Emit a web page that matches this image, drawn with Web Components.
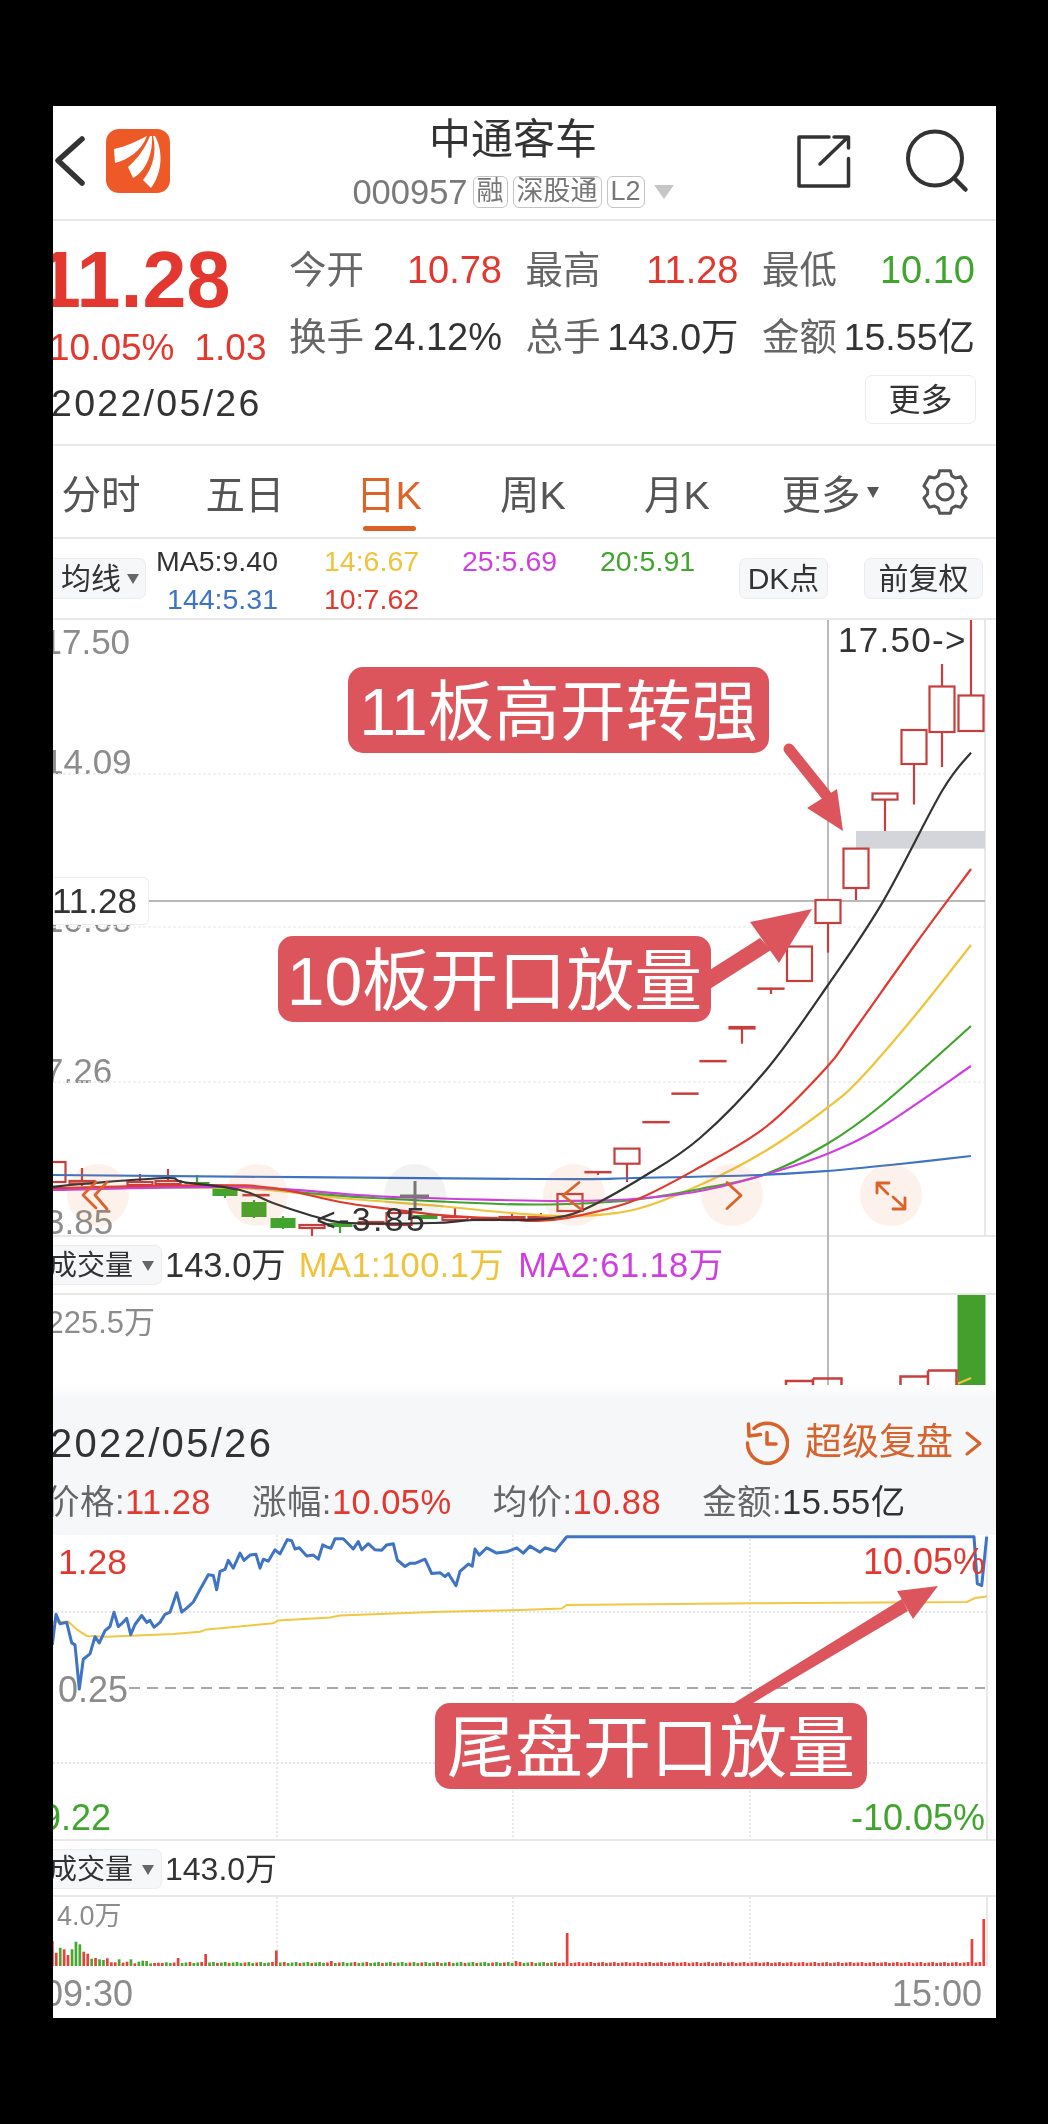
<!DOCTYPE html>
<html lang="zh-CN"><head><meta charset="utf-8"><title>中通客车</title>
<style>
html,body{margin:0;background:#000}
body{height:2124px;font-family:"Liberation Sans","Noto Sans CJK SC",sans-serif;color:#333}
</style></head>
<body>
<hq-app>
  <stock-header></stock-header>
  <quote-panel></quote-panel>
  <period-tabs></period-tabs>
  <ma-legend></ma-legend>
  <kline-chart></kline-chart>
  <vol-bar size="34.5" crosshair value="143.0万"><span style="color:#f0c33c;margin-left:13px;letter-spacing:.4px">MA1:100.1万</span><span style="color:#cf3fe0;margin-left:14px;letter-spacing:.4px">MA2:61.18万</span></vol-bar>
  <kline-volume></kline-volume>
  <detail-bar></detail-bar>
  <intraday-chart></intraday-chart>
  <vol-bar size="32" value="143.0万" style="height:56px"></vol-bar>
  <mini-volume></mini-volume>
  <time-axis></time-axis>
</hq-app>
<script>
const RED='#e2382f',GREEN='#3fa52c',CANDLE='#c63f3c',AXIS='#8c8c8c';
const LINE='#e8e8e8';
function el(name,css,html){
  customElements.define(name,class extends HTMLElement{
    constructor(){super();const s=this.attachShadow({mode:'open'});
      const body=typeof html==='function'?html(this):html;
      s.innerHTML=`<style>:host{display:block;box-sizing:border-box;position:relative}*{box-sizing:border-box}${css}</style>${body}`;}
  });
}
// smooth path through points
function smooth(p){
  let d=`M${p[0][0]} ${p[0][1]}`;
  for(let i=0;i<p.length-1;i++){
    const a=p[i-1]||p[i],b=p[i],c=p[i+1],e=p[i+2]||c;
    d+=`C${(b[0]+(c[0]-a[0])/6).toFixed(1)} ${(b[1]+(c[1]-a[1])/6).toFixed(1)},${(c[0]-(e[0]-b[0])/6).toFixed(1)} ${(c[1]-(e[1]-b[1])/6).toFixed(1)},${c[0]} ${c[1]}`;
  }
  return d;
}
const CANVAS=`.l{position:absolute;white-space:nowrap;transform:translateY(-50%);line-height:1.2}svg{position:absolute;left:0;top:0;display:block}`;
const svg=(y0,h,inner)=>`<svg width="943" height="${h}" viewBox="53 ${y0} 943 ${h}" fill="none">${inner}</svg>`;
const lab=(y0,x,y,t,size,color,extra='')=>`<span class="l" style="left:${x-53}px;top:${y-y0}px;font-size:${size}px;color:${color};${extra}">${t}</span>`;
const labR=(y0,x,y,t,size,color,extra='')=>`<span class="l" style="right:${996-x}px;top:${y-y0}px;font-size:${size}px;color:${color};${extra}">${t}</span>`;

function gearPath(cx,cy){
  const P=(a,r)=>{const t=a*Math.PI/180;return (cx+r*Math.cos(t)).toFixed(1)+' '+(cy+r*Math.sin(t)).toFixed(1);};
  let d=[];
  for(let k=0;k<6;k++){const a=-90+k*60;d.push(P(a-23,17.5),P(a-14,22),P(a+14,22),P(a+23,17.5));}
  return 'M'+d.join('L')+'Z';
}

el('hq-app',`:host{width:943px;height:1912px;margin:106px 0 0 53px;overflow:hidden;background:#fff;filter:blur(.45px)}`,`<slot></slot>`);

el('tool-chip',`:host{display:inline-flex;align-items:center;justify-content:center;gap:6px;height:40px;padding-top:1px;background:#f6f7f9;border:1.5px solid #ececef;border-radius:7px;font-size:30px;color:#333;white-space:nowrap;line-height:1}
 i{flex:none;width:0;height:0;border-left:6.5px solid transparent;border-right:6.5px solid transparent;border-top:10px solid #666}`,
 h=>`<slot></slot>${h.hasAttribute('caret')?'<i></i>':''}`);

el('stock-header',CANVAS+`:host{height:115px;display:flex;border-bottom:2px solid ${LINE}}
 .left{width:290px;position:relative}
 .mid{width:340px;display:flex;flex-direction:column;align-items:center;padding-top:9px;position:relative}
 h1{margin:0;font-weight:400;font-size:42px;line-height:50px;color:#333}
 .sub{display:flex;align-items:center;margin-top:11px;height:32px;color:#7a7a7a;font-size:34.5px;line-height:32px}
 .tag{height:32px;margin-left:5px;padding:0 3px;border:1.5px solid #c4c4c4;border-radius:6px;font-size:27px;line-height:28px;color:#777}
 .tri{margin-left:9px;width:0;height:0;border-left:10px solid transparent;border-right:10px solid transparent;border-top:14px solid #c6c6c6}`,
`<div class="left">${svg(106,113,`
   <path d="M82 139 58 160.500 82 183" stroke="#333" stroke-width="5.500" stroke-linecap="round" stroke-linejoin="round"/>
   <rect x="106" y="129" width="64" height="64" rx="13" fill="#ee5a27"/>
   <path d="M147 136C135 142 125 147 114 149L115 163C128 160 142 150 147 136Z" fill="#fff"/>
   <path d="M150 136C144 150 138 158 128 167L133 178C145 172 153 155 152 136Z" fill="#fff"/>
   <path d="M153 136C157 152 153 168 143 180L151 188C163 172 163 150 155 136Z" fill="#fff"/>
   <path d="M829 137H799V186H848.500V158.500M820 164 847 138M834 137H848.500V148" stroke="#333" stroke-width="3.500" stroke-linejoin="round" stroke-linecap="round"/>
   <circle cx="935" cy="158.500" r="27" stroke="#333" stroke-width="4"/>
   <path d="M954 178 965.500 189.500" stroke="#333" stroke-width="4.500" stroke-linecap="round"/>`)}</div>
 <div class="mid"><h1>中通客车</h1>
  <div class="sub"><span>000957</span><span class="tag">融</span><span class="tag">深股通</span><span class="tag">L2</span><span class="tri"></span></div></div>`);

el('quote-panel',`:host{height:225px;display:flex;border-bottom:2px solid ${LINE}}
 .a{width:236px;flex:none;padding-top:20px}
 .big{margin-left:-16px;font-size:79px;font-weight:700;line-height:78px;color:${RED}}
 .chg{margin:7px 0 0 -4px;display:flex;gap:20px;font-size:37px;line-height:44px;color:${RED}}
 .dt{margin:11px 0 0 -2px;font-size:37.500px;line-height:44px;letter-spacing:2.300px;color:#333}
 .b{flex:1;padding-top:27px;display:flex;flex-direction:column;align-items:flex-end}
 .g{align-self:stretch;display:grid;grid-template-columns:repeat(3,213px);column-gap:23.500px;row-gap:23px}
 .c{display:flex;justify-content:space-between;line-height:44px;font-size:38px;color:#333;white-space:nowrap}
 .c span:first-child{font-size:37.500px;color:#666}
 .r{color:${RED}}.gr{color:${GREEN}}
 .t{font-size:37.500px}
 tool-chip{margin:16px 20px 0 0;width:111px;height:49px;background:#fff;font-size:32px}`,
`<div class="a"><div class="big">11.28</div><div class="chg"><span>10.05%</span><span>1.03</span></div><div class="dt">2022/05/26</div></div>
 <div class="b"><div class="g">
  <div class="c"><span>今开</span><span class="r">10.78</span></div>
  <div class="c"><span>最高</span><span class="r">11.28</span></div>
  <div class="c"><span>最低</span><span class="gr">10.10</span></div>
  <div class="c"><span>换手</span><span>24.12%</span></div>
  <div class="c"><span>总手</span><span class="t">143.0万</span></div>
  <div class="c"><span>金额</span><span class="t">15.55亿</span></div>
 </div><tool-chip>更多</tool-chip></div>`);

el('period-tabs',`:host{height:93px;display:flex;padding-top:24px;margin-left:-24px;border-bottom:2px solid ${LINE}}
 .t{width:144px;flex:none;position:relative;display:flex;flex-direction:column;align-items:center;font-size:39.500px;line-height:50px;color:#555;white-space:nowrap}
 .on{color:#dc6427}
 .on::after{content:"";width:53px;height:5px;margin-top:6px;border-radius:3px;background:#dc5f25}
 .t i{position:absolute;left:118px;top:17px;width:0;height:0;border-left:6.500px solid transparent;border-right:6.500px solid transparent;border-top:11px solid #555}
 svg{margin:-2px 0 0 29px;flex:none;display:block}`,
`<div class="t">分时</div><div class="t">五日</div><div class="t on">日K</div><div class="t">周K</div><div class="t">月K</div><div class="t">更多<i></i></div>
 <svg width="46" height="48" viewBox="0 0 46 48" fill="none" stroke="#555" stroke-width="3" stroke-linejoin="round"><path d="${gearPath(23,24)}"/><circle cx="23" cy="24" r="8"/></svg>`);

el('ma-legend',`:host{height:81px;display:flex;border-bottom:2px solid ${LINE}}
 tool-chip{flex:none;margin-top:19px;height:41px}
 .avg{width:93px;justify-content:flex-end;padding-right:6px;border-left:0;border-radius:0 7px 7px 0;gap:6px}
 .g{display:grid;grid-template-columns:124px 92px 92px 92px;column-gap:46px;grid-auto-rows:38px;margin:3px 0 0 8px;font-size:28.500px;line-height:38px;text-align:right;white-space:nowrap}
 .sp{flex:1}
 .dk{width:89px;margin-right:36px}.fq{width:119px;margin-right:13px}`,
`<tool-chip class="avg" caret>均线</tool-chip>
 <div class="g"><span style="color:#333">MA5:9.40</span><span style="color:#f0c33c">14:6.67</span><span style="color:#cf3fe0">25:5.69</span><span style="color:${GREEN}">20:5.91</span>
  <span style="color:#3f74c4">144:5.31</span><span style="color:${RED}">10:7.62</span></div>
 <div class="sp"></div><tool-chip class="dk">DK点</tool-chip><tool-chip class="fq">前复权</tool-chip>`);

el('note-tag',`:host{position:absolute;display:flex;align-items:center;justify-content:center;padding-top:4px;background:#dc555c;color:#fff;border-radius:15px;white-space:nowrap;line-height:1}`,`<slot></slot>`);

const Y0=620;
function candle(cx,t,b,wt,wb,color=CANDLE,w=25){
  let s='';
  if(wt!=null)s+=`<path d="M${cx} ${wt}V${wb}" stroke="${color}" stroke-width="2.200"/>`;
  if(color===GREEN)s+=`<rect x="${cx-w/2}" y="${t}" width="${w}" height="${b-t}" fill="${color}"/>`;
  else s+=`<rect x="${cx-w/2}" y="${t}" width="${w}" height="${b-t}" fill="#fff" stroke="${color}" stroke-width="2.200"/>`;
  return s;
}
const ma=[
 ['#f0c33c',[[52,1188],[240,1188],[340,1198],[440,1206],[500,1212],[567,1216],[633,1210],[700,1185],[767,1150],[827,1108],[860,1079],[913,1018],[971,945]]],
 [GREEN,[[52,1189],[240,1187],[307,1193],[373,1198],[500,1204],[567,1204],[633,1200],[700,1189],[763,1175],[827,1144],[883,1104],[971,1026]]],
 ['#cf3fe0',[[52,1190],[240,1187],[373,1196],[500,1200],[567,1201],[633,1199],[700,1191],[767,1174],[827,1154],[883,1126],[971,1066]]],
 ['#3f74c4',[[52,1175],[540,1179],[633,1178],[760,1175],[828,1171],[900,1164],[971,1156]]],
 ['#e0392f',[[52,1188],[207,1185],[273,1188],[340,1202],[390,1209],[440,1215],[507,1219],[533,1221],[567,1218],[633,1201],[700,1167],[767,1126],[827,1067],[853,1032],[917,942],[971,869]]],
 ['#333',[[52,1187],[93,1183],[167,1178],[183,1182],[240,1190],[273,1203],[320,1218],[350,1223],[433,1223],[473,1220],[520,1220],[553,1218],[583,1210],[643,1177],[700,1138],[767,1069],[828,985],[883,901.600],[942,791],[971,752.600]]]
];
const cs=[[971,695.500,731,619,695.500],[942,686.500,732,664,767],[914,730,764,730,804.500],[885,793.500,799.600,793.500,831],[856,848.600,888,848.600,900],[828,900,923,900,952.600],[799.500,946.500,981],[771,988.500,988.800,988.500,994],[742,1027,1028.500,1027,1043.700],[713,1061,1061.300],[685,1093.500,1093.800],[656,1122,1122.300],[627,1148.600,1163.700,1148.600,1182],[598,1172,1172.300,1172,1175],[570,1194,1211],
 [53,1162,1182],[82,1181,1183.500,1168,1186],[140,1182,1185,1174,1186],[168,1181,1184,1169,1186],[256,1195,1195.300],[312,1225,1228,1225,1236],[371,1222,1224],[399,1213,1225],[455,1217,1220,1208,1222],[484,1218,1220],[512,1217,1219,1212,1221],[541,1217,1219,1213,1221]];
const gs=[[197,1182,1184,1175,1185],[225,1188,1196,1188,1198],[254,1202,1217,1200,1218],[283,1218,1228,1216,1229],[340,1223,1227,1223,1233],[425,1215,1219]];

el('kline-chart',CANVAS+`:host{height:617px;border-bottom:2px solid ${LINE}}`,
 ()=>lab(Y0,42.500,642,'17.50',35,AXIS)+lab(Y0,44,762,'14.09',35,AXIS)+lab(Y0,44,920,'10.68',35,AXIS)+lab(Y0,44,1071,'7.26',35,AXIS)+lab(Y0,45,1222,'3.85',35,AXIS)
 +svg(Y0,617,`
  <path d="M53 774H985M53 927H985M53 1082H985" stroke="#eee" stroke-width="1.500" stroke-dasharray="3 2"/>
  <path d="M985 620V1236" stroke="${LINE}" stroke-width="2"/>
  <path d="M828 620V1237M149 901H985" stroke="#b9b9b9" stroke-width="2"/>
  <rect x="856" y="831" width="129" height="17.600" fill="#d4d5da"/>
  ${cs.map(c=>candle(...c)).join('')}${gs.map(c=>candle(c[0],c[1],c[2],c[3],c[4],GREEN)).join('')}
  ${ma.map(m=>`<path d="${smooth(m[1])}" stroke="${m[0]}" stroke-width="2.200" stroke-linejoin="round"/>`).join('')}
  <g fill="#f0763a" fill-opacity=".1"><circle cx="98" cy="1195" r="31"/><circle cx="257" cy="1195" r="31"/><circle cx="574" cy="1195" r="31"/><circle cx="732" cy="1195" r="31"/><circle cx="891" cy="1195" r="31"/></g>
  <circle cx="415" cy="1195" r="31" fill="#000" fill-opacity=".05"/>
  <g stroke="#dd6229" stroke-width="2.800" stroke-linecap="round" stroke-linejoin="round">
   <path d="M96 1182 83 1195 96 1208M107 1182 95 1195 107 1209"/>
   <path d="M579 1182.500 563 1195.500 582 1210"/>
   <path d="M727 1182.500 741 1195.500 727 1208.600"/>
   <path d="M889 1183H877V1193M877 1183 888 1194M893 1197 905 1208M893 1209H905V1198"/>
  </g>
  <path d="M400 1196H429M415 1181V1210" stroke="#777" stroke-width="3"/>
  <path d="M789 749 826 795" stroke="#dc555c" stroke-width="11" stroke-linecap="round"/>
  <path d="M843 831 837 789 807 808Z" fill="#dc555c"/>
  <path d="M812 909 750 922 779 963Z" fill="#dc555c"/>
  <path d="M705 973 760 938 771 950 705 992Z" fill="#dc555c"/>`)
 +`<span class="l" style="left:0;top:${877-Y0}px;transform:none;width:96px;height:48px;background:#fff;border:1.500px solid #ececec;border-left:0;border-radius:0 6px 6px 0;font-size:35px;line-height:46px;color:#333;overflow:hidden"><span style="margin-left:-1px">11.28</span></span>`
 +lab(Y0,838,640,'17.50->',35,'#333','letter-spacing:1.300px')
 +lab(Y0,316,1219,'&lt;-3.85',34,'#333','letter-spacing:2.300px')
 +`<note-tag style="left:295px;top:${667-Y0}px;width:421px;height:86px;font-size:66px">11板高开转强</note-tag>`
 +`<note-tag style="left:225px;top:${936-Y0}px;width:433px;height:86px;font-size:68px">10板开口放量</note-tag>`);

el('vol-bar',`:host{height:58px;display:flex;padding-top:8px;border-bottom:2px solid ${LINE};white-space:nowrap}
 tool-chip{width:109px;height:40px;border-left:0;border-radius:0 7px 7px 0;justify-content:flex-end;padding-right:7px;font-size:28px;gap:9px}
 .v{display:flex;margin-left:3px;line-height:41px;color:#333}
 .x{position:absolute;left:774px;top:0;bottom:-2px;width:2px;background:#b9b9b9}`,
 h=>`<tool-chip caret>成交量</tool-chip><div class="v" style="font-size:${h.getAttribute('size')}px">${h.getAttribute('value')}<slot></slot></div>${h.hasAttribute('crosshair')?'<i class="x"></i>':''}`);

el('kline-volume',CANVAS+`:host{height:105px;background:linear-gradient(#fff 90px,#f6f7f9 104px)}`,
 ()=>svg(1295,105,`
  <rect x="957.500" y="1294" width="28" height="91" fill="#459f2c"/>
  <path d="M957 1384 971 1378" stroke="#f0c33c" stroke-width="2"/>
  <path d="M828 1295V1385" stroke="#b9b9b9" stroke-width="2"/>
  <g stroke="${CANDLE}" stroke-width="2.500"><path d="M786 1385V1381H813V1385M813 1378.500H841.500V1385M813 1378.500V1385"/><path d="M900.500 1385V1376.500H928V1385M928 1370.500H956.500V1385M928 1370.500V1385"/></g>`)
 +labR(1295,155,1323,'225.5万',31,AXIS));

el('detail-bar',`:host{height:135px;background:#f6f7f9;display:flex;flex-direction:column}
 .top{display:flex;align-items:center;height:72px;padding:14px 14px 0 0}
 .d{margin-left:-3px;font-size:40px;line-height:50px;letter-spacing:2.300px;color:#333}
 .rp{margin-left:auto;display:flex;align-items:center;color:#d8622b;font-size:37px;line-height:50px}
 .rp svg{margin-right:16px}.rp b{font-weight:400;margin-right:12px}
 .row{display:flex;gap:41px;margin:8px 0 0 -8px;font-size:34.500px;line-height:44px;letter-spacing:.45px;color:#666;white-space:nowrap}
 .r{color:${RED}}.k{color:#333}`,
`<div class="top"><span class="d">2022/05/26</span><div class="rp">
  <svg width="44" height="44" viewBox="0 0 44 44" fill="none" stroke="#d8622b" stroke-width="3.500" stroke-linecap="round" stroke-linejoin="round"><path d="M2.500 22A20 20 0 1 0 9 7.500M3.500 3 4 15 15.500 13.500M22 11.500V23H31"/></svg>
  <b>超级复盘</b>
  <svg style="margin:0" width="17" height="25" viewBox="0 0 17 25" fill="none" stroke="#d8622b" stroke-width="3" stroke-linecap="round" stroke-linejoin="round"><path d="M2 2 15 12.500 2 23"/></svg></div></div>
 <div class="row"><span>价格:<span class="r">11.28</span></span><span>涨幅:<span class="r">10.05%</span></span><span>均价:<span class="r">10.88</span></span><span>金额:<span class="k">15.55亿</span></span></div>`);

const z5=[[37,600],[48,525],[60,548],[80,545],[95,595],[105,600],[118,708],[130,635],[150,622],[165,580],[178,595],[195,565],[210,555],[222,520],[235,555],[245,548],[260,535],[272,575],[285,550],[305,528],[320,545],[330,540],[342,557],[360,545],[375,525],[390,520],[410,472],[425,520],[440,510],[460,495],[475,472],[505,428],[520,430],[530,465],[540,420],[555,415],[565,393],[580,412],[600,375],[612,393],[630,380],[648,378],[660,412],[670,390],[685,395],[705,367],[720,377],[742,342],[755,345],[765,365],[778,362],[800,382],[820,380],[835,390],[848,355],[860,360],[873,363],[885,340],[910,340],[940,365],[955,347],[965,367],[985,352],[1005,367],[1025,368],[1040,355],[1060,352],[1072,392],[1095,408],[1110,400],[1125,400],[1155,390],[1175,425],[1200,423],[1215,433],[1225,425],[1248,455],[1260,420],[1285,402],[1297,407],[1305,365],[1318,380],[1340,362],[1370,375],[1400,372],[1430,362],[1450,375],[1470,358],[1500,373]];
const z6=[[75,362],[105,370],[125,350],[140,335],[1362,335],[1372,450],[1385,455],[1400,335]];
const blue=z5.map(p=>[40+p[0]/3,1400+p[1]/2.45]).concat(z6.map(p=>[520+p[0]/3,1400+p[1]/2.45]));
const avgL=[[37,545],[85,543],[110,562],[140,578],[200,580],[400,573],[480,568],[500,562],[700,547],[715,540],[870,533],[900,528],[1200,519],[1420,515]].map(p=>[40+p[0]/3,1400+p[1]/2.45]).concat([[125,511],[140,502],[700,498],[1340,495],[1365,485],[1395,482],[1400,480]].map(p=>[520+p[0]/3,1400+p[1]/2.45]));
const pts=a=>a.map(p=>p[0].toFixed(1)+' '+p[1].toFixed(1)).join(' ');

el('intraday-chart',CANVAS+`:host{height:306px;border-bottom:2px solid ${LINE}}`,
 ()=>{const y=1535;return lab(y,58,1562,'1.28',35.500,RED)+lab(y,58,1690,'0.25',36,AXIS)+lab(y,41,1818,'9.22',36,GREEN)
 +svg(y,306,`
  <path d="M53 1612H987M53 1763H987" stroke="#ddd" stroke-width="1.500" stroke-dasharray="2 2"/>
  <path d="M277 1535V1840M513 1535V1840M750 1535V1840" stroke="#e2e2e2" stroke-width="1.500" stroke-dasharray="2 2"/>
  <path d="M987 1535V1840" stroke="${LINE}" stroke-width="2"/>
  <path d="M129 1688H985" stroke="#a8a8a8" stroke-width="2" stroke-dasharray="11 7"/>
  <polyline points="${pts(avgL)}" stroke="#f2c744" stroke-width="2"/>
  <polyline points="${pts(blue)}" stroke="#3f74c4" stroke-width="3" stroke-linejoin="round"/>
  <path d="M734 1703 753 1703 908 1611 902 1599Z" fill="#dc555c"/>
  <path d="M938 1586 897 1591 913 1619Z" fill="#dc555c"/>`)
 +labR(y,985,1562,'10.05%',36,RED)+labR(y,985,1818,'-10.05%',36,GREEN)
 +`<note-tag style="left:382px;top:${1703-y}px;width:432px;height:86px;font-size:68px">尾盘开口放量</note-tag>`;});

const head=[75,40,55,50,33,50,73,65,43,37,22,24,20,18,23,11,11,20,10,13,20,8,13,16,15,8,9,10,9,11];
const headC='rrgrrgggrrgrggrrrgrrgrggggrrrg';
function miniBars(){
  const spike={32:8,39:12,57:15.5,71:5,118:5,131:33,234:27,237:47};let s='';
  for(let i=0;i<238;i++){
    const x=51+i*3.93;let h=i<head.length?head[i]/3:3+((i*7)%3)*.5;
    if(spike[i])h=spike[i];
    let c=i<head.length?headC[i]:(i>=128||spike[i]||(i*5)%7<2?'r':'g');
    s+=`<rect x="${x.toFixed(1)}" y="${(1966-h).toFixed(1)}" width="2.700" height="${h.toFixed(1)}" fill="${c==='r'?'#e5423c':'#47a72e'}"/>`;
  }
  return s;
}
el('mini-volume',CANVAS+`:host{height:70px}`,
 ()=>lab(1897,57,1916,'4.0万',27,AXIS)+svg(1897,70,`
  <path d="M277 1897V1966M513 1897V1966M750 1897V1966" stroke="#e2e2e2" stroke-width="1.500" stroke-dasharray="2 2"/>
  <path d="M987 1897V1966" stroke="${LINE}" stroke-width="2"/>
  ${miniBars()}`));

el('time-axis',`:host{height:51px;display:flex;justify-content:space-between;align-items:center;padding-top:2px;margin-left:-10px;padding-right:14px;font-size:36px;color:${AXIS};line-height:44px}`,
 `<span>09:30</span><span>15:00</span>`);
</script>
</body></html>
